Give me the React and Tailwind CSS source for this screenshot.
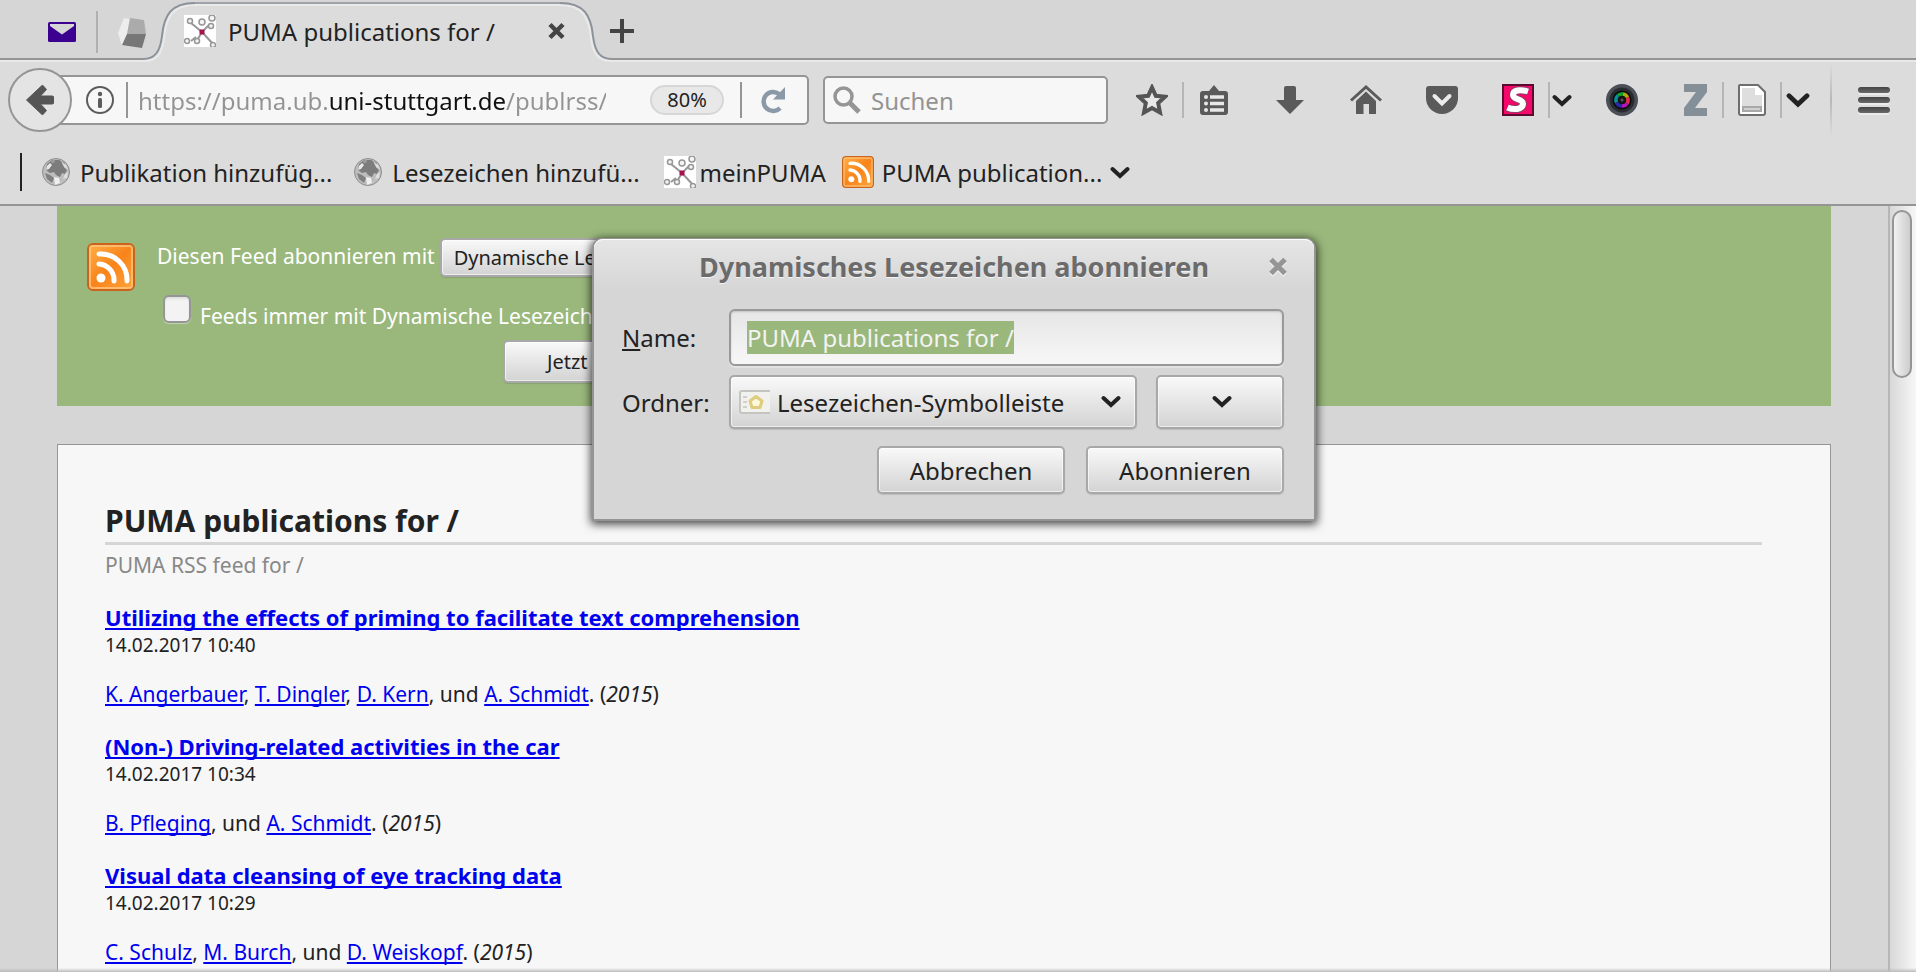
const FULL_UNDERLINE = "[text-decoration-skip-ink:none]";

const BUTTON =
  "rounded-[5px] border-2 border-[#a8a8a8] bg-linear-to-b from-[#f9f9f9] to-[#d3d3d3] text-[#222] shadow-[inset_0_0_0_1px_rgba(255,255,255,0.6),0_1px_1px_rgba(0,0,0,0.12)]";

function PumaIcon({ className }) {
  return (
    <svg viewBox="0 0 32 32" className={className} aria-hidden="true">
      <rect width="32" height="32" fill="#fff" />
      <g fill="none" stroke="#979797" strokeWidth="2">
        <path d="M18 17 L7 8" />
        <path d="M18 17 L26 9" />
        <path d="M18 17 L30 30" />
        <path d="M18 17 L12 27" />
        <path d="M7 26 L12 22" />
      </g>
      <g fill="#f4f4f4" stroke="#979797" strokeWidth="1.500">
        <circle cx="6" cy="6" r="2.500" />
        <circle cx="18" cy="7" r="3" />
        <circle cx="28" cy="3" r="3" />
        <circle cx="27" cy="11" r="2.500" />
        <circle cx="3" cy="26" r="2.500" />
        <circle cx="13" cy="26" r="2.500" />
        <circle cx="29" cy="30" r="2.500" />
      </g>
      <rect x="15.500" y="14.500" width="5" height="5" rx="1" fill="#a8114f" />
    </svg>
  );
}

function RssIcon({ className }) {
  return (
    <svg viewBox="0 0 48 48" className={className} aria-hidden="true">
      <defs>
        <linearGradient id="rss" x1="0" y1="0" x2="1" y2="1">
          <stop offset="0" stopColor="#ffb148" />
          <stop offset="0.5" stopColor="#f8841a" />
          <stop offset="1" stopColor="#ffa53c" />
        </linearGradient>
      </defs>
      <rect x="1" y="1" width="46" height="46" rx="5" fill="url(#rss)" stroke="#c9651b" strokeWidth="2" />
      <rect x="3" y="3" width="42" height="42" rx="3" fill="none" stroke="#ffc37d" strokeWidth="2" opacity="0.8" />
      <circle cx="14" cy="35" r="4.500" fill="#fff" />
      <path d="M12 21 A16 16 0 0 1 27 38 M12 11 A26 26 0 0 1 40 38" fill="none" stroke="#fff" strokeWidth="5" strokeLinecap="round" />
    </svg>
  );
}

function GlobeIcon() {
  return (
    <svg viewBox="0 0 28 28" className="size-7 shrink-0" aria-hidden="true">
      <circle cx="14" cy="14" r="13.500" fill="#bdbdbd" stroke="#8e8e8e" />
      <path d="M5 6 L10 2 L17 2 L23 5 L22 9 L25 12 L23 16 L20 15 L18 19 L14 17 L12 14 L8 15 L4 12 Z" fill="#7c7c7c" />
      <path d="M3 15 L8 17 L12 20 L10 25 L5 21 Z" fill="#808080" />
      <path d="M5 8 L8 5 L10 7 L7 11 L4 12 Z" fill="#e8e8e8" />
      <path d="M19 3 L24 7 L26 12 L22 9 Z" fill="#dadada" />
      <path d="M12 19 L17 20 L18 25 L13 27 Z" fill="#efefef" />
      <path d="M23 16 L26 14 L25 20 L21 21 Z" fill="#dedede" />
      <path d="M10 2 L13 2 L12 5 L9 5 Z" fill="#9d9d9d" />
    </svg>
  );
}

function Chevron({ className }) {
  return (
    <svg viewBox="0 0 20 13" className={className} aria-hidden="true">
      <path d="M2.500 3 L10 10 L17.500 3" fill="none" stroke="#222" strokeWidth="4" strokeLinecap="round" />
    </svg>
  );
}

function Separator({ className }) {
  return <span className={`w-0.5 shrink-0 ${className}`} />;
}

function TabStrip() {
  return (
    <div className="flex h-[62px] shrink-0 bg-[#d6d6d6] pl-12 shadow-[inset_0_-2px_#e9e9e9,inset_0_-4px_#959595]">
      <button aria-label="Mail" className="mt-[22px] h-5 w-7">
        <svg viewBox="0 0 28 20" aria-hidden="true">
          <rect width="28" height="20" rx="1.500" fill="#3c0091" />
          <path d="M2 2 H26 V4 L14 12.500 L2 4 Z" fill="#d6d6d6" />
        </svg>
      </button>
      <Separator className="mt-[11px] ml-5 h-[42px] bg-[#b0b0b0]" />
      <button aria-label="Tab" className="relative z-10 mt-[18px] ml-5 h-[30px] w-[29px]">
        <svg viewBox="0 0 29 30" aria-hidden="true">
          <path d="M6 0 L12 1 L9 17 L4 28 L0 15 Z" fill="#ededed" />
          <path d="M12 0 L26 2 L28 16 L9 16 Z" fill="#ababab" />
          <path d="M9 16 L28 16 L24 30 L4 27 Z" fill="#777" />
        </svg>
      </button>
      <div className="relative -ml-1 w-[469px]">
        <div className="absolute inset-0 flex">
          <svg viewBox="0 0 52 62" className="h-[62px] w-[52px] shrink-0" aria-hidden="true">
            <path d="M0 59 C12 59 17 52 19 36 C21 15 28 3 52 3 V62 H0 Z" fill="#dcdcdc" />
            <path d="M0 61 C14 61 19 54 21 38 C23 17 30 5 52 5" fill="none" stroke="#eaeaea" strokeWidth="2" />
            <path d="M0 59 C12 59 17 52 19 36 C21 15 28 3 52 3" fill="none" stroke="#8b9299" strokeWidth="2" />
          </svg>
          <div className="mt-0.5 flex-1 border-t-2 border-[#9ea4a9] bg-[#dcdcdc] shadow-[inset_0_2px_#eaeaea]" />
          <svg viewBox="0 0 52 62" className="h-[62px] w-[52px] shrink-0" aria-hidden="true">
            <path d="M52 59 C40 59 35 52 33 36 C31 15 24 3 0 3 V62 H52 Z" fill="#dcdcdc" />
            <path d="M52 61 C38 61 33 54 31 38 C29 17 22 5 0 5" fill="none" stroke="#eaeaea" strokeWidth="2" />
            <path d="M52 59 C40 59 35 52 33 36 C31 15 24 3 0 3" fill="none" stroke="#8b9299" strokeWidth="2" />
          </svg>
        </div>
        <div className="relative flex h-[62px] items-center pr-[47px] pl-[41px]">
          <PumaIcon className="size-8" />
          <span className="ml-3 flex-1 whitespace-nowrap">PUMA publications for /</span>
          <button aria-label="Tab schließen" className="h-[18px] w-[17px]">
            <svg viewBox="0 0 17 18" aria-hidden="true">
              <path d="M2 2.500 L15 15.500 M15 2.500 L2 15.500" stroke="#444" strokeWidth="4.500" />
            </svg>
          </button>
        </div>
      </div>
      <button aria-label="Neuer Tab" className="mt-[19px] -ml-0.5 size-6">
        <svg viewBox="0 0 24 24" aria-hidden="true">
          <path d="M12 0 V24 M0 12 H24" stroke="#444" strokeWidth="4" />
        </svg>
      </button>
    </div>
  );
}

function NavBar() {
  return (
    <div className="flex h-[76px] shrink-0 items-center bg-[#dcdcdc] pr-[26px] pl-2">
      <button aria-label="Zurück" className="relative z-10 flex size-16 shrink-0 items-center justify-center rounded-full border-2 border-[#959595] bg-[#e4e4e4]">
        <svg viewBox="0 0 28 30" className="h-[30px] w-7" aria-hidden="true">
          <path d="M28 13 V17 Q28 19 26 19 H14.500 L20.500 25.500 L16.500 30 L0.500 15 L16.500 0 L20.500 4.500 L14.500 11 H26 Q28 11 28 13 Z" fill="#555" stroke="#555" strokeLinejoin="round" />
        </svg>
      </button>
      <div className="-ml-3 flex h-[50px] min-w-0 flex-1 items-center rounded-r-[5px] border-2 border-[#959595] bg-[#f7f7f7] pr-[21px] pl-6">
        <button aria-label="Seiteninformationen" className="size-7 shrink-0">
          <svg viewBox="0 0 28 28" aria-hidden="true">
            <circle cx="14" cy="14" r="13" fill="none" stroke="#5c5c5c" strokeWidth="2" />
            <circle cx="14" cy="8" r="2.200" fill="#5c5c5c" />
            <rect x="12" y="12" width="4" height="10" rx="1.500" fill="#5c5c5c" />
          </svg>
        </button>
        <Separator className="ml-3 h-9 bg-[#959595]" />
        <input
          aria-label="Adresse"
          defaultValue="https://puma.ub.uni-stuttgart.de/publrss/"
          className="ml-2.5 h-[33px] min-w-0 flex-1 bg-[linear-gradient(90deg,#939393_190px,#111_190px,#111_368px,#939393_368px)] bg-clip-text text-transparent outline-none"
        />
        <button className="ml-11 h-[30px] w-[74px] shrink-0 rounded-full border-2 border-[#d6d6d6] bg-[#e8e8e8] text-[20px] leading-[26px]">80%</button>
        <Separator className="ml-4 h-9 bg-[#959595]" />
        <button aria-label="Neu laden" className="ml-5 size-6 shrink-0">
          <svg viewBox="0 0 24 24" className="overflow-visible" aria-hidden="true">
            <path d="M18 20 A9.500 9.500 0 1 1 17 6" fill="none" stroke="#8a98a8" strokeWidth="4.500" />
            <path d="M23 -1 V11.500 H11 Z" fill="#8a98a8" />
          </svg>
        </button>
      </div>
      <label className="ml-3.5 flex h-12 w-[285px] shrink-0 items-center rounded-[5px] border-2 border-[#959595] bg-[#f7f7f7] pl-2">
        <svg viewBox="0 0 28 28" className="size-7 shrink-0" aria-hidden="true">
          <circle cx="10.500" cy="10.500" r="8.500" fill="none" stroke="#959595" strokeWidth="3.500" />
          <path d="M17 17 L26 26" stroke="#959595" strokeWidth="5" />
        </svg>
        <input aria-label="Suchen" placeholder="Suchen" className="ml-2.5 h-[33px] min-w-0 flex-1 bg-transparent outline-none placeholder:text-[#939393]" />
      </label>
      <button aria-label="Lesezeichen setzen" className="ml-7 size-8 shrink-0">
        <svg viewBox="0 0 32 32" aria-hidden="true">
          <path d="M16 3.500 L19.800 11.800 L29 12.800 L22.200 19 L24 28.500 L16 24 L8 28.500 L9.800 19 L3 12.800 L12.200 11.800 Z" fill="#e8e8e8" stroke="#555" strokeWidth="4" />
        </svg>
      </button>
      <Separator className="ml-3.5 h-9 bg-[#b6b6b6]" />
      <button aria-label="Lesezeichen anzeigen" className="ml-4 h-[30px] w-7 shrink-0">
        <svg viewBox="0 0 28 30" aria-hidden="true">
          <path d="M3 6 H9 L14 0 L19 6 H25 Q28 6 28 9 V27 Q28 30 25 30 H3 Q0 30 0 27 V9 Q0 6 3 6 Z" fill="#5a5a5a" />
          <path d="M10 12 H24 M10 18.500 H24 M10 25 H24" stroke="#e8e8e8" strokeWidth="3.500" />
          <circle cx="6" cy="12" r="2" fill="#e8e8e8" />
          <circle cx="6" cy="18.500" r="2" fill="#e8e8e8" />
          <circle cx="6" cy="25" r="2" fill="#e8e8e8" />
        </svg>
      </button>
      <button aria-label="Downloads" className="ml-12 size-7 shrink-0">
        <svg viewBox="0 0 28 28" aria-hidden="true">
          <path d="M8 2 Q8 0 10 0 H18 Q20 0 20 2 V14 H28 L14 28 L0 14 H8 Z" fill="#5a5a5a" />
        </svg>
      </button>
      <button aria-label="Startseite" className="ml-[46px] h-[30px] w-8 shrink-0">
        <svg viewBox="0 0 32 30" aria-hidden="true">
          <path d="M1 15.500 L16 2 L31 15.500" fill="none" stroke="#5a5a5a" strokeWidth="3" />
          <path d="M16 6.500 L26 16 V29 H19 V19 H13.500 V29 H6 V16 Z" fill="#5a5a5a" />
        </svg>
      </button>
      <button aria-label="Pocket" className="ml-11 h-7 w-8 shrink-0">
        <svg viewBox="0 0 32 28" aria-hidden="true">
          <path d="M3 0 H29 Q32 0 32 3 V12 A16 16 0 0 1 0 12 V3 Q0 0 3 0 Z" fill="#5a5a5a" />
          <path d="M8.500 10 L16 17.500 L23.500 10" fill="none" stroke="#ececec" strokeWidth="4" strokeLinecap="round" />
        </svg>
      </button>
      <button aria-label="S" className="ml-11 size-8 shrink-0">
        <svg viewBox="0 0 32 32" aria-hidden="true">
          <rect x="1" y="1" width="30" height="30" fill="#f5086a" stroke="#5e0a30" strokeWidth="2" />
          <path d="M26 7.500 C18 5 11 6 11 11 C11 16 21.500 14.500 21 20 C20.500 26 11 26 5.500 23.500" fill="none" stroke="#8d4063" strokeWidth="8" />
          <path d="M26 7.500 C18 5 11 6 11 11 C11 16 21.500 14.500 21 20 C20.500 26 11 26 5.500 23.500" fill="none" stroke="#fff" strokeWidth="6" />
        </svg>
      </button>
      <Separator className="ml-3.5 h-9 bg-[#b6b6b6]" />
      <button aria-label="Optionen" className="ml-0.5 shrink-0"><Chevron className="h-[13px] w-5" /></button>
      <button aria-label="Kamera" className="ml-[34px] size-8 shrink-0">
        <svg viewBox="0 0 32 32" aria-hidden="true">
          <circle cx="16" cy="16" r="16" fill="#4b4f57" />
          <circle cx="16" cy="16" r="12.500" fill="#2a2b30" />
          <circle cx="16" cy="16" r="9.500" fill="#0b0b0d" />
          <g fill="none" strokeWidth="3.500">
            <path d="M10.500 18.500 A6 6 0 0 1 12 11.500" stroke="#0c8f9c" />
            <path d="M12 11.500 A6 6 0 0 1 17 10" stroke="#10a52a" />
            <path d="M17 10 A6 6 0 0 1 21.500 13.500" stroke="#b3a90c" />
            <path d="M21.500 13.500 A6 6 0 0 1 21 19.500" stroke="#e02a52" />
            <path d="M21 19.500 A6 6 0 0 1 16 22" stroke="#b316c0" />
            <path d="M16 22 A6 6 0 0 1 10.500 18.500" stroke="#272ba8" />
          </g>
          <circle cx="16" cy="16" r="4" fill="#151515" />
          <circle cx="16" cy="16" r="1.500" fill="#555" />
        </svg>
      </button>
      <button aria-label="Zotero" className="ml-[46px] h-8 w-[23px] shrink-0">
        <svg viewBox="0 0 23 32" aria-hidden="true">
          <path d="M0 0 H23 V8 L11 24 H23 V32 H0 V24 L12 8 H0 Z" fill="#858f98" />
        </svg>
      </button>
      <Separator className="ml-[15px] h-9 bg-[#b6b6b6]" />
      <button aria-label="Dokument" className="ml-3.5 h-8 w-7 shrink-0">
        <svg viewBox="0 0 28 32" aria-hidden="true">
          <path d="M2 1 H20 L27 8 V29 Q27 31 25 31 H3 Q1 31 1 29 V2 Q1 1 2 1 Z" fill="#fff" stroke="#6e6e6e" strokeWidth="2" />
          <path d="M4 4 H17 V11 H24 V28 H4 Z" fill="#dedede" />
          <rect x="5" y="23" width="18" height="4" fill="#d0d0d0" stroke="#a9a9a9" strokeWidth="2" />
        </svg>
      </button>
      <Separator className="ml-3.5 h-9 bg-[#b6b6b6]" />
      <button aria-label="Dokumentoptionen" className="ml-1 shrink-0"><Chevron className="h-4 w-6" /></button>
      <Separator className="ml-5 h-[72px] bg-linear-to-b from-transparent via-[#b8b8b8] to-transparent" />
      <button aria-label="Menü" className="ml-[26px] flex shrink-0 flex-col gap-1">
        <span className="h-1.5 w-8 rounded-full bg-linear-to-b from-[#444] to-[#6a6a6a] shadow-[0_2px_#ebebeb]" />
        <span className="h-1.5 w-8 rounded-full bg-linear-to-b from-[#444] to-[#6a6a6a] shadow-[0_2px_#ebebeb]" />
        <span className="h-1.5 w-8 rounded-full bg-linear-to-b from-[#444] to-[#6a6a6a] shadow-[0_2px_#ebebeb]" />
      </button>
    </div>
  );
}

function BookmarksBar() {
  return (
    <nav aria-label="Lesezeichen" className="flex h-[68px] shrink-0 items-center border-b-2 border-[#959595] bg-[#dcdcdc] pt-0.5 pl-5 whitespace-nowrap">
      <Separator className="h-[38px] bg-[#222]" />
      <a href="#add-publication" className="ml-5 flex items-center gap-2.5"><GlobeIcon />Publikation hinzufüg...</a>
      <a href="#add-bookmark" className="ml-[22px] flex items-center gap-2.5"><GlobeIcon />Lesezeichen hinzufü...</a>
      <a href="#puma" className="ml-6 flex items-center gap-1"><PumaIcon className="size-8" />meinPUMA</a>
      <button className="ml-4 flex items-center gap-2">
        <RssIcon className="size-8" />
        PUMA publication...
        <Chevron className="h-[13px] w-5" />
      </button>
    </nav>
  );
}

function FeedHeader() {
  return (
    <section className="flex h-[200px] shrink-0 bg-[#9ab87c] pt-8 pl-[30px] text-[21px] leading-[29px] whitespace-nowrap text-white">
      <RssIcon className="mt-[5px] size-12 shrink-0" />
      <form className="ml-[22px] flex w-[588px] flex-col" onSubmit={(e) => e.preventDefault()}>
        <div className="flex h-[39px] items-start gap-[5px]">
          <label htmlFor="reader" className="leading-9">Diesen Feed abonnieren mit</label>
          <select id="reader" className={`${BUTTON} h-[39px] min-w-0 flex-1 appearance-none pl-3 text-[20px]`}>
            <option>Dynamische Lesezeichen</option>
          </select>
        </div>
        <div className="mt-[18px] flex items-start pl-1.5">
          <input id="always" type="checkbox" className="size-7 shrink-0 appearance-none rounded-[6px] border-2 border-[#959595] bg-[#f3f3f3] shadow-[inset_0_2px_2px_rgba(0,0,0,0.08),0_1px_1px_rgba(255,255,255,0.4)]" />
          <label htmlFor="always" className="mt-[7px] ml-[9px]">Feeds immer mit Dynamische Lesezeichen abonnieren.</label>
        </div>
        <button className={`${BUTTON} mt-[9px] h-[43px] self-end px-[42px] text-[20px]`}>Jetzt abonnieren</button>
      </form>
    </section>
  );
}

const ENTRIES = [
  { title: "Utilizing the effects of priming to facilitate text comprehension", date: "14.02.2017 10:40", authors: ["K. Angerbauer", "T. Dingler", "D. Kern", "A. Schmidt"] },
  { title: "(Non-) Driving-related activities in the car", date: "14.02.2017 10:34", authors: ["B. Pfleging", "A. Schmidt"] },
  { title: "Visual data cleansing of eye tracking data", date: "14.02.2017 10:29", authors: ["C. Schulz", "M. Burch", "D. Weiskopf"] },
];

function Entry({ title, date, authors }) {
  return (
    <article className="mb-[23px]">
      <h2 className="text-[22px] leading-[29px] font-bold">
        <a href="#entry" className={`text-[#0000ee] underline ${FULL_UNDERLINE}`}>{title}</a>
      </h2>
      <time className="block text-[19px] leading-[26px]">{date}</time>
      <p className="mt-[22px] text-[21px] leading-[29px]">
        {authors.map((name, i) => (
          <span key={name}>
            {i > 0 && ", "}
            {i > 0 && i === authors.length - 1 && "und "}
            <a href="#author" className={`text-[#0000ee] underline ${FULL_UNDERLINE}`}>{name}</a>
          </span>
        ))}
        . (<em>2015</em>)
      </p>
    </article>
  );
}

function SubscribeDialog() {
  return (
    <div role="dialog" aria-labelledby="dialog-title" className="absolute top-[238px] left-[592px] w-[724px] rounded-t-[10px] border-x-2 border-t border-b-2 border-[#949494] bg-[#d6d6d6] shadow-[0_2px_10px_1px_rgba(0,0,0,0.75)]">
      <div className="relative rounded-t-[9px] bg-linear-to-b from-[#e6e6e6] to-[#d6d6d6] pt-[9px] pb-1 text-center shadow-[inset_0_1px_#fff]">
        <h2 id="dialog-title" className="text-[27px] leading-[37px] font-bold text-[#6b6b6b] [text-shadow:0_1px_#f4f4f4]">Dynamisches Lesezeichen abonnieren</h2>
        <button aria-label="Schließen" className="absolute top-[17px] right-[27px] h-[22px] w-[18px]">
          <svg viewBox="0 0 18 22" aria-hidden="true">
            <path d="M2 5 L16 19 M16 5 L2 19" stroke="#f2f2f2" strokeWidth="5" />
            <path d="M2 3.500 L16 17.500 M16 3.500 L2 17.500" stroke="#959595" strokeWidth="5" />
          </svg>
        </button>
      </div>
      <form className="pt-5 pr-[30px] pb-[25px] pl-7" onSubmit={(e) => e.preventDefault()}>
        <div className="flex items-center">
          <label htmlFor="name" className="w-[107px]"><u className={FULL_UNDERLINE}>N</u>ame:</label>
          <input
            id="name"
            ref={(el) => el && el.select()}
            defaultValue="PUMA publications for /"
            className="h-[57px] min-w-0 flex-1 rounded-[6px] border-2 border-[#999] bg-linear-to-b from-[#e6e6e6] to-[#f7f7f7] px-4 shadow-[inset_0_1px_2px_rgba(0,0,0,0.15),0_2px_#e2e2e2] outline-none selection:bg-[#9ab87c] selection:text-[#f3f3f3]"
          />
        </div>
        <div className="mt-[9px] flex items-center">
          <label htmlFor="folder" className="w-[107px]">Ordner:</label>
          <div className="relative flex-1">
            <select id="folder" className={`${BUTTON} h-[54px] w-full appearance-none pl-[46px]`}>
              <option>Lesezeichen-Symbolleiste</option>
            </select>
            <svg viewBox="0 0 32 24" className="pointer-events-none absolute top-[15px] left-2.5 h-6 w-8" aria-hidden="true">
              <rect x="1" y="1" width="30" height="22" rx="2" fill="#f1f1ee" />
              <path d="M31 1 H3 Q1 1 1 3 V21 Q1 23 3 23 H31" fill="none" stroke="#c4c4c0" strokeWidth="2" />
              <path d="M4 7 H8 M4 12 H8 M4 17 H8" stroke="#cfcfcb" strokeWidth="2" />
              <path d="M17 6.500 L23 11 L21 17.500 H13 L11 11 Z" fill="#fbf8dc" stroke="#dfcc7c" strokeWidth="3" strokeLinejoin="round" />
            </svg>
            <Chevron className="pointer-events-none absolute top-5 right-4 h-[13px] w-5" />
          </div>
          <button aria-label="Erweitern" className={`${BUTTON} ml-[19px] flex h-[54px] w-32 items-center justify-center pb-0.5 pl-1`}>
            <Chevron className="h-[13px] w-5" />
          </button>
        </div>
        <div className="mt-[17px] flex justify-end gap-[21px]">
          <button className={`${BUTTON} h-12 w-[188px]`}>Abbrechen</button>
          <button className={`${BUTTON} h-12 w-[198px]`}>Abonnieren</button>
        </div>
      </form>
    </div>
  );
}

export default function App() {
  return (
    <div className="relative flex h-screen flex-col overflow-hidden bg-[#d6d6d6] font-['Noto_Sans',sans-serif] text-[24px] leading-[33px] text-[#222]">
      <TabStrip />
      <NavBar />
      <BookmarksBar />
      <div className="flex min-h-0 flex-1">
        <main className="flex min-w-0 flex-1 flex-col overflow-hidden px-[57px]">
          <FeedHeader />
          <section className="mt-[38px] shrink-0 border border-b-0 border-[#959595] bg-[#f7f7f7] pt-14 pr-[68px] pl-[47px]">
            <h1 className="border-b-[3px] border-[#d6d6d6] pb-px text-[30px] leading-10 font-bold">PUMA publications for /</h1>
            <p className="mt-1.5 mb-[23px] text-[21px] leading-[29px] text-[#888]">PUMA RSS feed for /</p>
            {ENTRIES.map((entry) => <Entry key={entry.title} {...entry} />)}
          </section>
        </main>
        <div className="w-7 shrink-0 border-l-2 border-[#b6b6b6] bg-linear-to-r from-[#d8d8d8] to-[#f7f7f7] pt-1 pl-0.5">
          <div className="h-[168px] w-5 rounded-full border-2 border-[#959595] bg-linear-to-r from-[#f2f2f2] to-[#cdcdcd]" />
        </div>
      </div>
      <div className="pointer-events-none absolute inset-x-0 bottom-0 h-1 bg-linear-to-b from-transparent to-[#bbb]" />
      <SubscribeDialog />
    </div>
  );
}
